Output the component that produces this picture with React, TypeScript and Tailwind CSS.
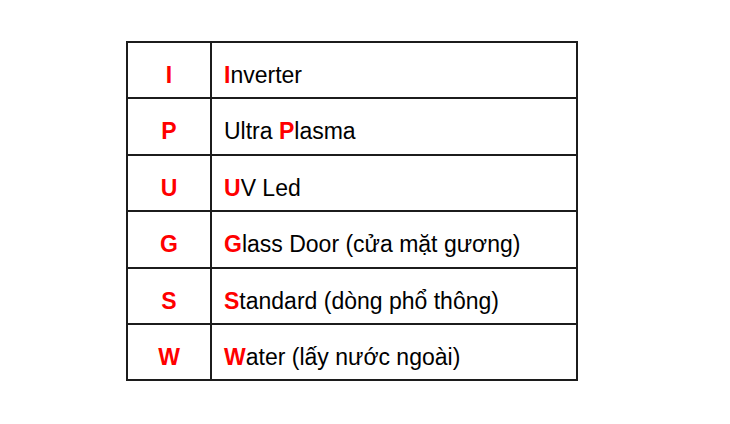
const Red = ({ c }: { c: string }) => <span className="font-bold text-[#ff0000]">{c}</span>;

const rows: { key: string; rest: React.ReactNode }[] = [
  { key: 'I', rest: <><Red c="I" />nverter</> },
  { key: 'P', rest: <>Ultra <Red c="P" />lasma</> },
  { key: 'U', rest: <><Red c="U" />V Led</> },
  { key: 'G', rest: <><Red c="G" />lass Door (cửa mặt gương)</> },
  { key: 'S', rest: <><Red c="S" />tandard (dòng phổ thông)</> },
  { key: 'W', rest: <><Red c="W" />ater (lấy nước ngoài)</> },
];

export default function App() {
  return (
    <div className="w-[730px] h-[424px] bg-white pt-[41px] pl-[126px]" style={{ fontFamily: '"Liberation Sans", Arial, sans-serif' }}>
      <table className="border-collapse text-[23px] text-black">
        <tbody>
          {rows.map(r => (
            <tr key={r.key} className="h-[56.4px]">
              <td className="w-[84px] border-2 border-[#1c1c1c] text-center align-middle pt-[10px] font-bold text-[#ff0000]">{r.key}</td>
              <td className="w-[366px] border-2 border-[#1c1c1c] align-middle pt-[10px] pl-[12px]">{r.rest}</td>
            </tr>
          ))}
        </tbody>
      </table>
    </div>
  );
}
